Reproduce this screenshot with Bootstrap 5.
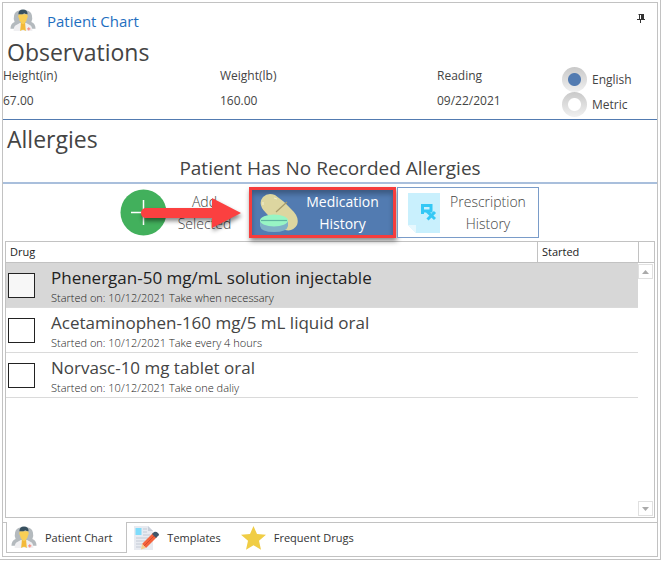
<!DOCTYPE html>
<html lang="en">
<head>
<meta charset="utf-8">
<meta name="viewport" content="width=device-width, initial-scale=1">
<title>Patient Chart</title>
<link href="https://cdn.jsdelivr.net/npm/bootstrap@5.3.0/dist/css/bootstrap.min.css" rel="stylesheet">
<script src="https://cdn.jsdelivr.net/npm/bootstrap@5.3.0/dist/js/bootstrap.bundle.min.js" defer></script>
<style>
  :root { --line: #c2c2c2; --ink: #444; --blue: #527bb1; }
  body { font-family: "Open Sans", "Noto Sans", sans-serif; font-size: 11px; line-height: 18px; color: var(--ink); background: #fff; padding-bottom: 3px; }
  .shell { border: solid var(--line); border-width: 0 1px 1px 0; margin-right: 2px; padding: 2px; }
  .panel { border: 1px solid var(--line); }
  .panel-title { height: 35px; padding: 0 12px 0 7px; }
  .panel-title h1 { font-size: 15px; line-height: 20px; color: #1f6fbf; margin-left: 11px; }
  .section-title { font-size: 23px; line-height: 28px; font-weight: 400; padding-left: 4px; }
  .pin { align-self: flex-start; margin-top: 10px; line-height: 0; }
  .vitals { display: grid; grid-template-columns: 217fr 217fr 125fr 95fr; padding: 1px 0 2px; border-bottom: 1px solid var(--blue); font-size: 12px; }
  .vitals dd { margin-top: 7px; }
  .vitals dt { font-weight: 400; }
  .unit { height: 25px; }
  .unit input { appearance: none; width: 25px; height: 25px; margin: 0 5px 0 0; border-radius: 50%;
    background: radial-gradient(circle, #fff 6px, transparent 7px), linear-gradient(#c9c9c9, #f0f0f0); }
  .unit input:checked { background: radial-gradient(circle, var(--blue) 6px, transparent 7px), linear-gradient(#c9c9c9, #f0f0f0); }
  .allergy-title { padding-top: 5px; margin-bottom: 2px; }
  .allergy-note { font-size: 19px; line-height: 26px; padding-bottom: 1px; border-bottom: 2px solid #a9bfdc; }
  .actions { padding: 3px 2px 3px 0; position: relative; }
  .action { border-radius: 0; border: 1px solid transparent; padding: 0; font-size: 14px; line-height: 22px; font-weight: 300; color: #444; height: 51px; background: #fff; }
  .action span { flex: 1; }
  .action-add { width: 130px; padding-right: 6px; }
  .action-med { width: 147px; border: 3px solid #f53d3d; background: var(--blue); color: #fff; font-weight: 400; box-shadow: 1px 3px 5px #0007, inset 0 4px 5px #0004; padding: 0 9px 0 7px; margin-right: 1px; }
  .action-rx { width: 142px; border-color: #7a9cc9; padding-right: 4px; }
  .callout-arrow { left: calc(50% - 190px); top: 10px; pointer-events: none; }
  .drug-box { border: 1px solid var(--line); margin: 0 2px 4px; }
  .drug-grid { width: 100%; border-collapse: separate; border-spacing: 0; table-layout: fixed; }
  .drug-grid th { height: 21px; font-weight: 400; padding: 0 4px; border-bottom: 1px solid var(--line); color: #222; }
  .drug-grid th + th { border-left: 1px solid var(--line); width: 101px; }
  .drug-grid td { height: 45px; padding: 3px 2px 0; vertical-align: top; border-bottom: 1px solid #dadada; }
  .drug-grid tr.chosen td { background: #d7d7d7; color: #222; }
  .drug-check { appearance: none; width: 27px; height: 25px; border: 1px solid #222; background: #fff; margin: 7px 16px 0 0; flex: none; }
  .chosen .drug-check { background: #f7f7f7; }
  .drug-check:checked { background: var(--blue); }
  .drug-name { font-size: 17px; line-height: 24px; }
  .drug-info { font-size: 11px; line-height: 16px; font-weight: 300; color: #222; }
  .scroller { width: 18px; }
  .scroll-head { height: 21px; border: solid var(--line); border-width: 0 0 1px 1px; }
  .scroll-btn { width: 15px; height: 15px; border: 1px solid #e0e0e0; background: #fff; padding: 0; margin: 1px 1px 1px 0; line-height: 0; }
  .tabs { border-top: 1px solid var(--line); height: 34px; padding-left: 3px; }
  .tab-btn { border: 1px solid transparent; border-top: 0; background: #fff; color: #333; height: 30px; padding: 0; }
  .tab-btn.active { border-color: var(--line); margin-top: -1px; height: 31px; padding: 1px 14px 0 4px; margin-right: 5px; }
  .tab-btn svg { margin-right: 8px; }
  .tab-btn + .tab-btn { margin-right: 18px; }
</style>
</head>
<body class="d-flex flex-column min-vh-100">
<svg class="d-none" aria-hidden="true">
  <symbol id="people" viewBox="0 0 24 22">
    <path d="M0 19q0-5 4-6.500Q2.500 10 3.500 6q1-4 5-4.500h7q4 .5 5 4.500 1 4-.5 6.500 4 1.500 4 6.500z" fill="#b4babe"/>
    <path d="M3 21q0-5 3-6l3-1.500h6l3 1.500q3 1 3 6z" fill="#f0f0f2"/>
    <path d="M8 5h8l.6 2.500-.8 1.500q-.4 2.500-1.800 4v3l.5 5-1.500-1h-2l-1.500 1 .5-5v-3q-1.400-1.500-1.800-4L7.400 7.500z" fill="#f9cf55"/>
    <path d="M7.600 5Q7.500.5 12 .5T16.400 5q-2 0-3-1Q11 5.500 7.600 5" fill="#37505f"/>
    <path d="M10 13.500l2 1 2-1 .5 7.500-1.500-1.500h-2L9.500 21z" fill="#f3b93a"/>
    <path d="M17.500 17.500v3M16 19h3" stroke="#f58a80"/>
  </symbol>
</svg>
<div class="shell d-flex flex-column flex-grow-1">
<main class="panel d-flex flex-column flex-grow-1">
  <header class="panel-title d-flex align-items-center">
    <svg width="26" height="23"><use href="#people"/></svg>
    <h1 class="mb-0 fw-normal">Patient Chart</h1>
    <button class="pin btn p-0 border-0 ms-auto" type="button" aria-label="Pin panel">
      <svg width="8" height="11" viewBox="0 0 8 11"><path d="M1.500 1.500h5M2.500 1v5M0 6.500h8M3.500 7v3" stroke="#333" fill="none"/><path d="M4 1h3v5H4z" fill="#333"/></svg>
    </button>
  </header>

  <section>
    <h2 class="section-title mb-0">Observations</h2>
    <div class="vitals">
      <dl class="mb-0"><dt>Height(in)</dt><dd class="mb-0">67.00</dd></dl>
      <dl class="mb-0"><dt>Weight(lb)</dt><dd class="mb-0">160.00</dd></dl>
      <dl class="mb-0"><dt>Reading</dt><dd class="mb-0">09/22/2021</dd></dl>
      <div>
        <div class="unit d-flex align-items-center"><input type="radio" name="unit" id="english" checked><label for="english">English</label></div>
        <div class="unit d-flex align-items-center"><input type="radio" name="unit" id="metric"><label for="metric">Metric</label></div>
      </div>
    </div>
  </section>

  <section>
    <h2 class="section-title allergy-title">Allergies</h2>
    <p class="allergy-note text-center mb-0">Patient Has No Recorded Allergies</p>
  </section>

  <div class="actions d-flex justify-content-center">
    <button class="action action-add btn d-flex align-items-center" type="button">
      <svg width="47" height="47" viewBox="0 0 47 47"><circle cx="23.500" cy="23.500" r="23" fill="#42b05c"/><path d="M23.500 11v25M11 23.500h25" stroke="#fff" stroke-width="1.500"/></svg>
      <span>Add<br>Selected</span>
    </button>
    <button class="action action-med btn d-flex align-items-center" type="button">
      <svg width="42" height="42" viewBox="0 0 42 42">
        <path d="M4 5q5-5 12-2 9 6 16 14 9 8 6 16-4 7-12 5Q17 32 7 21-2 12 4 5z" fill="#ddd6a0"/>
        <path d="M17 20l11-10" stroke="#a79b6b" stroke-width="1.200"/><path d="M15 6l3 1M4 10v3" stroke="#f1edc8" stroke-width="1.200"/>
        <path d="M1 28v6q1 6 14 6t14-6v-6z" fill="#7fb1c6"/>
        <ellipse cx="15" cy="28.500" rx="14" ry="6" fill="#98f5c4"/><path d="M2 28.500h26" stroke="#5fb6a0" stroke-width="1.200"/>
      </svg>
      <span>Medication<br>History</span>
    </button>
    <button class="action action-rx btn d-flex align-items-center" type="button">
      <svg class="ms-2" width="36" height="40" viewBox="0 0 36 40">
        <path d="M2 0h32v40H10l-8-8z" fill="#c9f0fd"/><path d="M2 32h8v8z" fill="#e6f8fe"/>
        <path d="M16.500 21v-8.500H25v5.500h-8M20.500 18l8.500 8M29 19l-7.500 7.500" stroke="#34c8f5" stroke-width="3" fill="none"/>
      </svg>
      <span>Prescription<br>History</span>
    </button>
    <svg class="callout-arrow position-absolute" width="106" height="38" viewBox="0 0 106 38" aria-hidden="true" style="filter:drop-shadow(1px 3px 2px #0007)">
      <path d="M5 14h67V4l29 15-29 15V24H5q-4-1-4-5t4-5z" fill="#fb4040"/>
    </svg>
  </div>

  <div class="drug-box d-flex flex-grow-1">
    <div class="flex-grow-1">
      <table class="drug-grid">
        <thead><tr><th scope="col">Drug</th><th scope="col">Started</th></tr></thead>
        <tbody>
          <tr class="chosen"><td colspan="2"><div class="d-flex"><input class="drug-check" type="checkbox" id="d1"><label for="d1"><span class="drug-name d-block">Phenergan-50 mg/mL solution injectable</span><span class="drug-info d-block">Started on: 10/12/2021 Take when necessary</span></label></div></td></tr>
          <tr><td colspan="2"><div class="d-flex"><input class="drug-check" type="checkbox" id="d2"><label for="d2"><span class="drug-name d-block">Acetaminophen-160 mg/5 mL liquid oral</span><span class="drug-info d-block">Started on: 10/12/2021 Take every 4 hours</span></label></div></td></tr>
          <tr><td colspan="2"><div class="d-flex"><input class="drug-check" type="checkbox" id="d3"><label for="d3"><span class="drug-name d-block">Norvasc-10 mg tablet oral</span><span class="drug-info d-block">Started on: 10/12/2021 Take one daliy</span></label></div></td></tr>
        </tbody>
      </table>
    </div>
    <div class="scroller d-flex flex-column align-items-end">
      <div class="scroll-head w-100"></div>
      <button class="scroll-btn" type="button" aria-label="Scroll up"><svg width="7" height="4"><path d="M0 4L3.500 0 7 4z" fill="#aaa"/></svg></button>
      <button class="scroll-btn mt-auto" type="button" aria-label="Scroll down"><svg width="7" height="4"><path d="M0 0l3.500 4L7 0z" fill="#aaa"/></svg></button>
    </div>
  </div>

  <nav class="tabs d-flex" role="tablist">
    <button class="tab-btn active d-flex align-items-center" type="button" role="tab" aria-selected="true"><svg width="26" height="23"><use href="#people"/></svg>Patient Chart</button>
    <button class="tab-btn d-flex align-items-center" type="button" role="tab">
      <svg width="26" height="24" viewBox="0 0 26 24"><path d="M1 0h14l5 5v19H1z" fill="#e8ebf1"/><path d="M15 0l5 5h-5z" fill="#c9d0da"/><path d="M2.500 2h6v7h-6z" fill="#7fdcfb"/><path d="M10 3h4M10 6h4M10 9h7M3 12h12M3 15h9M3 18h6M3 21h5" stroke="#c3cad5"/><path d="M9 18L20 7l4 4-11 11z" fill="#f4633c"/><path d="M11 20L22 9" stroke="#d9482f"/><path d="M9 18l4 4-5 1.500z" fill="#f5cd8c"/><path d="M19 8l2-2q2-1 4 1t0 3l-2 2z" fill="#40566a"/></svg>Templates</button>
    <button class="tab-btn d-flex align-items-center" type="button" role="tab">
      <svg width="25" height="24" viewBox="0 0 25 24"><path d="M12.500 0l3.500 8 9 .8-7 6 2 9-7.500-4.600L5 23.800l2-9-7-6L9 8z" fill="#f0cd45"/></svg>Frequent Drugs</button>
  </nav>
</main>
</div>
</body>
</html>
